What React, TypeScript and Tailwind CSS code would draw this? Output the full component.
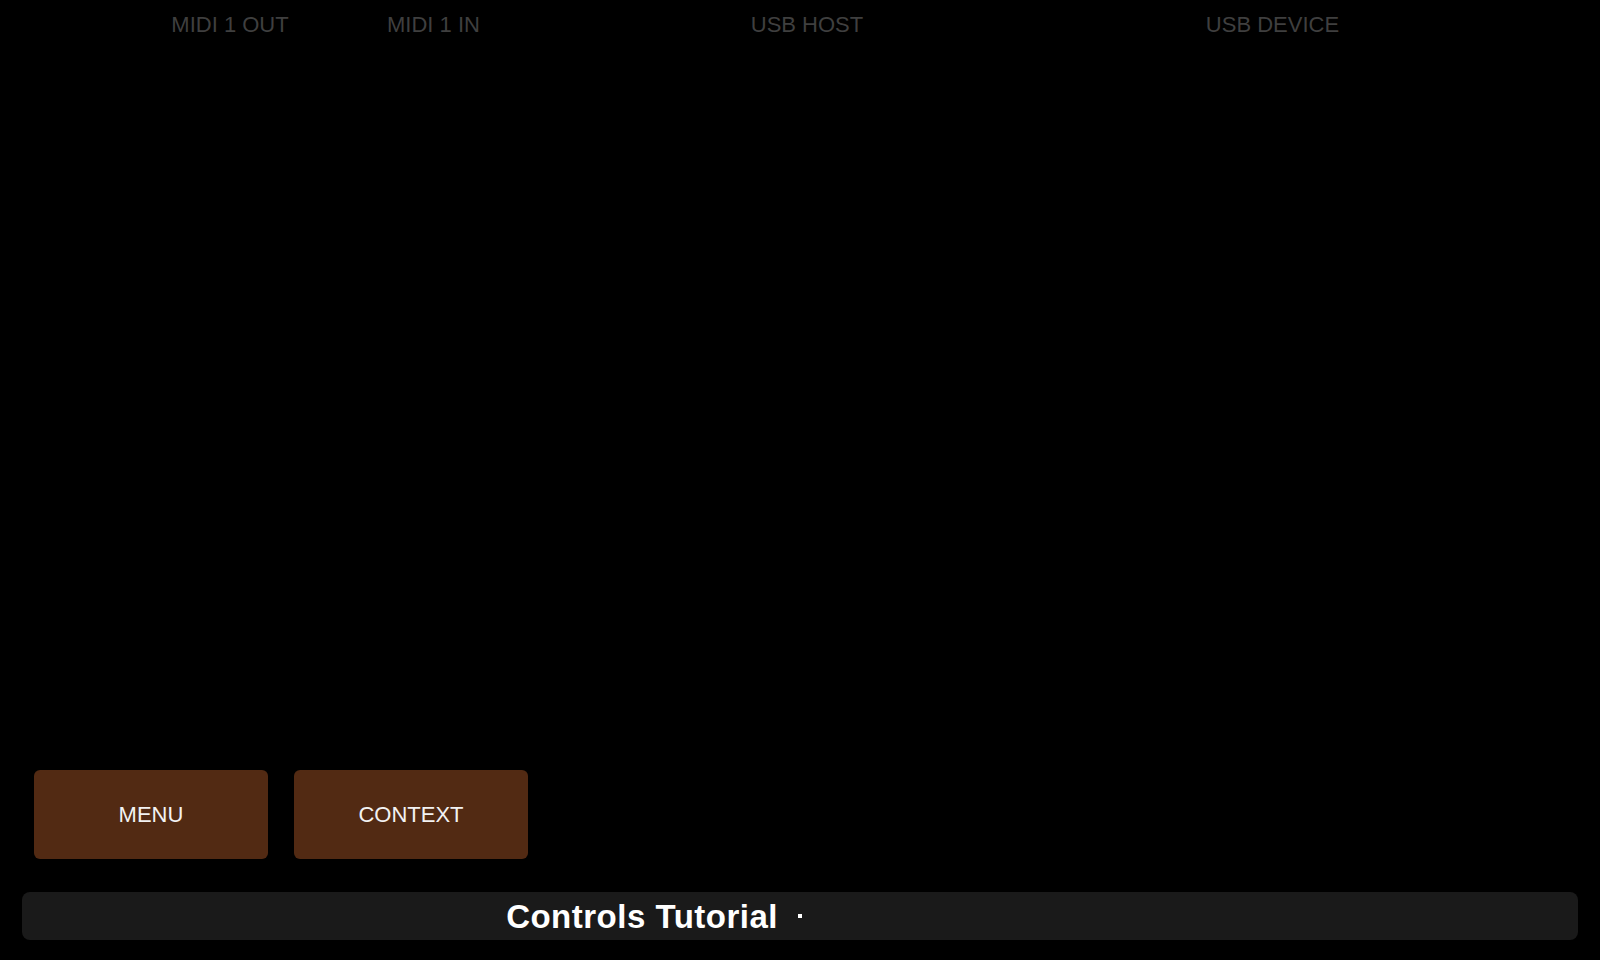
import React from "react";

export default function App() {
  const font = { fontFamily: '"Liberation Sans", Arial, sans-serif' };
  return (
    <div className="w-[1600px] h-[960px] bg-black flex flex-col overflow-hidden" style={font}>
      <div className="flex pt-[14px] pl-[130px] text-[22px] leading-[22px] text-[#3f3f3f] whitespace-nowrap">
        <div className="w-[200px] text-center">MIDI 1 OUT</div>
        <div className="w-[207px] text-center">MIDI 1 IN</div>
        <div className="w-[540px] text-center">USB HOST</div>
        <div className="w-[391px] text-center">USB DEVICE</div>
      </div>
      <div className="flex-1" />
      <div className="flex gap-[26px] pl-[34px]">
        <div className="w-[234px] h-[89px] rounded-md bg-[#522a13] flex items-center justify-center text-[22px] text-[#f2f2f2]">
          MENU
        </div>
        <div className="w-[234px] h-[89px] rounded-md bg-[#522a13] flex items-center justify-center text-[22px] text-[#f2f2f2]">
          CONTEXT
        </div>
      </div>
      <div className="mt-[33px] mb-[20px] mx-[22px] h-[48px] rounded-lg bg-[#1a1a1a] grid grid-cols-[1fr_4px_1fr] items-center">
        <div className="flex justify-end">
          <span className="mr-[20px] text-[33px] font-bold tracking-[0.5px] text-white leading-none">Controls Tutorial</span>
        </div>
        <div className="w-[4px] h-[4px] bg-white" />
        <div />
      </div>
    </div>
  );
}
